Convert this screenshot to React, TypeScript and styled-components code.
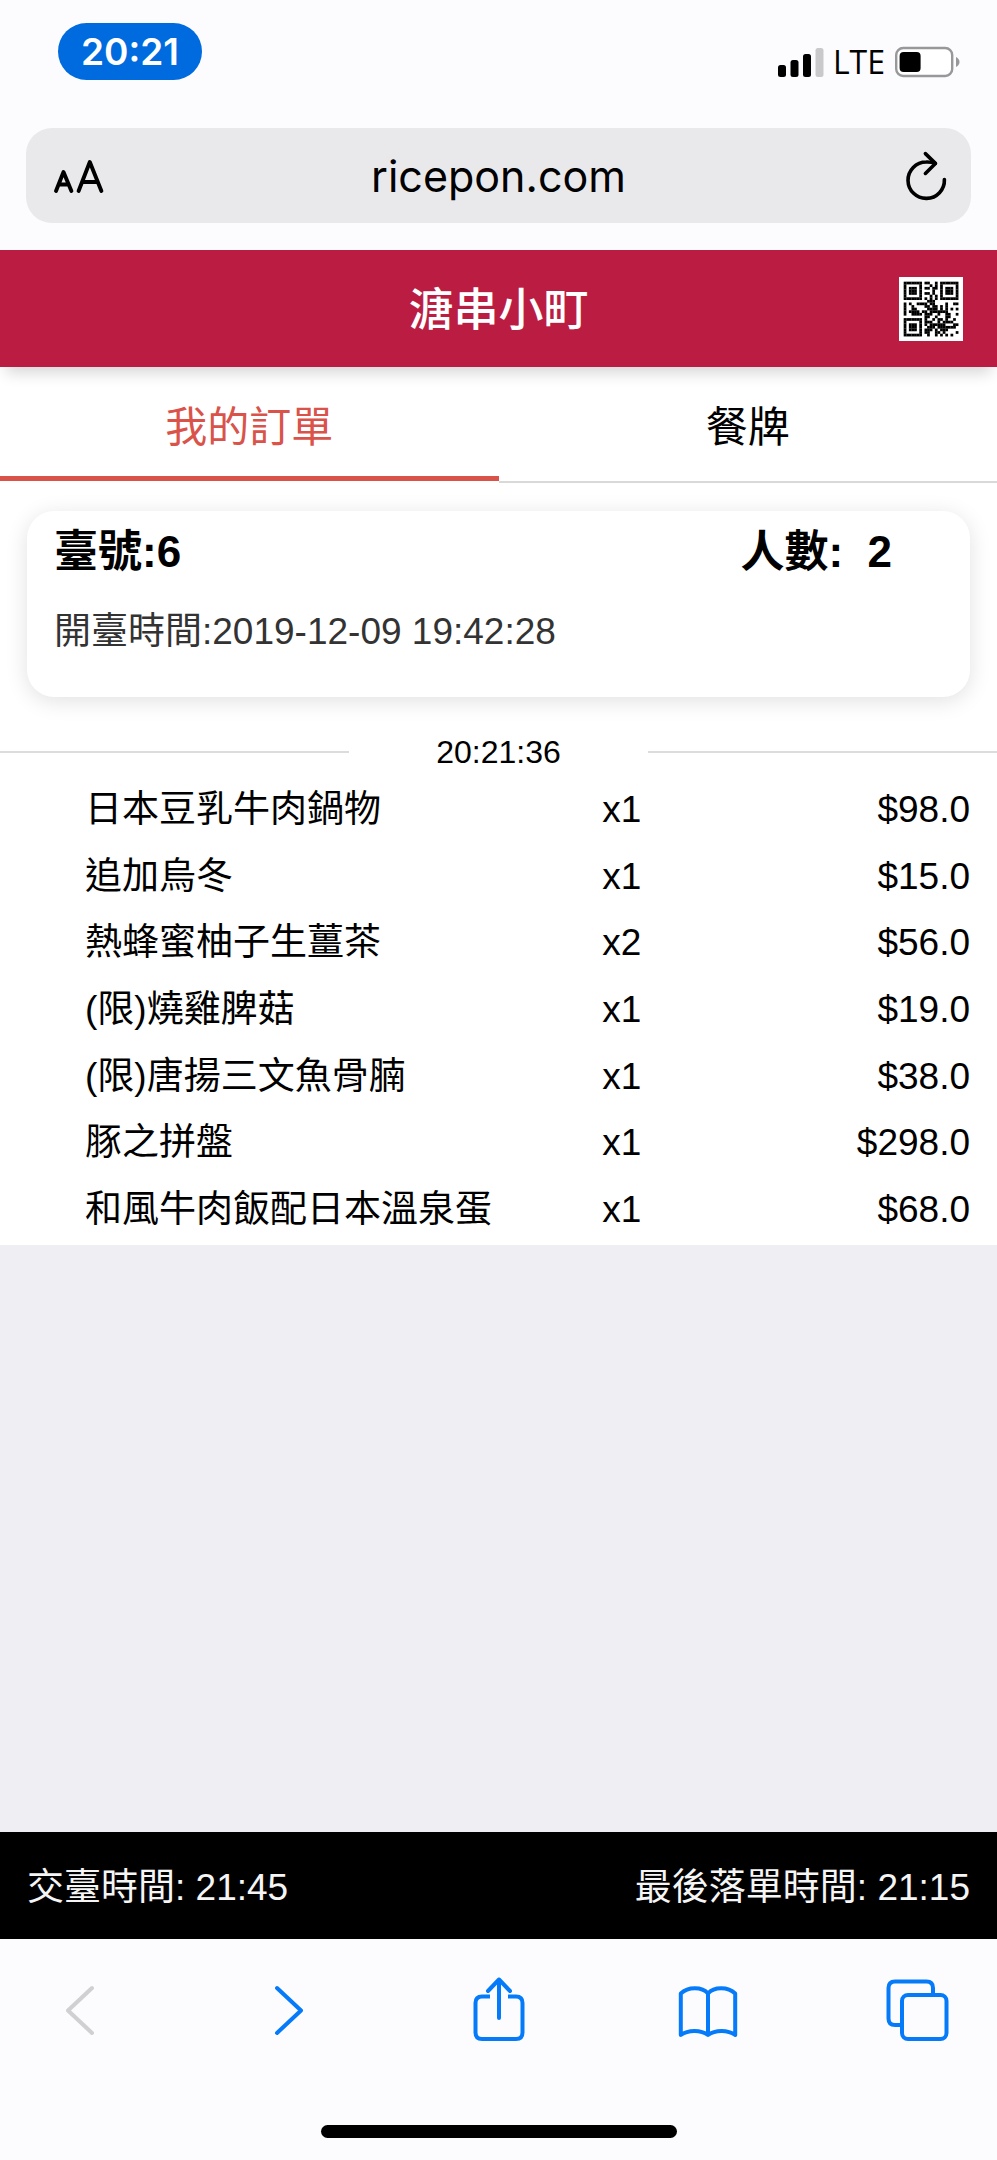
import React from "react";
import styled, { createGlobalStyle } from "styled-components";

const GlobalStyle = createGlobalStyle`
  *, *::before, *::after { box-sizing: border-box; }
  body {
    margin: 0;
    background: #fcfcfe;
    color: #000;
    font-family: "Liberation Sans", "Noto Sans CJK TC", sans-serif;
  }
  button, input { font: inherit; color: inherit; }
  button {
    padding: 0;
    border: 0;
    background: none;
    cursor: pointer;
  }
  svg { display: block; }
`;

const systemFont = `Inter, "Noto Sans CJK TC", sans-serif`;

const Screen = styled.div`
  display: flex;
  flex-direction: column;
  min-height: 100vh;
`;

const StatusBar = styled.header`
  display: flex;
  justify-content: space-between;
  align-items: flex-start;
  padding: 23px 37px 48px 58px;
  font-family: ${systemFont};
`;

const ClockPill = styled.time`
  width: 144px;
  border-radius: 29px;
  background: #006bde;
  color: #fff;
  font-size: 37px;
  font-weight: 600;
  line-height: 57px;
  text-align: center;
`;

const StatusIcons = styled.div`
  display: flex;
  align-items: center;
  gap: 9px;
  margin-top: 23px;
  font-family: "Open Sans", sans-serif;
  font-size: 32px;
  font-weight: 500;
  line-height: 32px;
`;

const AddressBar = styled.div`
  display: flex;
  align-items: center;
  justify-content: space-between;
  height: 95px;
  margin: 0 26px 27px;
  padding: 0 23px;
  border-radius: 26px;
  background: #e9e9eb;
  font-family: ${systemFont};
`;

const Address = styled.input`
  flex: 1;
  min-width: 0;
  padding: 0;
  border: 0;
  outline: 0;
  background: none;
  font-size: 43px;
  line-height: 56px;
  text-align: center;
`;

const ShopHeader = styled.div`
  display: grid;
  grid-template-columns: 64px 1fr 64px;
  align-items: center;
  height: 117px;
  padding: 0 34px;
  background: #bb1d42;
  color: #fff;
  box-shadow: 0 12px 14px -6px rgba(0, 0, 0, 0.16);
  z-index: 1;
`;

const ShopName = styled.h1`
  grid-column: 2;
  margin: 0;
  padding-top: 4px;
  font-size: 45px;
  font-weight: 500;
  line-height: 60px;
  text-align: center;
`;

const TabList = styled.div`
  display: flex;
  align-items: flex-start;
  background: #fff;
`;

const Tab = styled.button<{ $active?: boolean }>`
  flex: 1;
  height: ${(p) => (p.$active ? 114 : 116)}px;
  padding-top: ${(p) => (p.$active ? 12 : 8)}px;
  border-bottom: ${(p) => (p.$active ? "5px solid #d9534a" : "2px solid #d9d9d9")};
  color: ${(p) => (p.$active ? "#d9534a" : "#000")};
  font-size: 42px;
  line-height: 60px;
`;

const Orders = styled.main`
  padding-top: 28px;
  background: #fff;
`;

const TableCard = styled.section`
  height: 186px;
  margin: 0 27px;
  padding: 11px 78px 0 27px;
  border-radius: 27px;
  background: #fff;
  box-shadow: 0 4px 22px rgba(0, 0, 0, 0.12);
`;

const TableSummary = styled.div`
  display: flex;
  justify-content: space-between;
  font-size: 44px;
  font-weight: 700;
  line-height: 60px;
`;

const OpenedAt = styled.p`
  margin: 20px 0 0;
  color: #333;
  font-size: 37px;
  line-height: 60px;
`;

const BatchDivider = styled.div`
  display: grid;
  grid-template-columns: 35fr 30fr 35fr;
  align-items: center;
  margin-top: 35px;
  font-size: 32px;
  line-height: 40px;
  text-align: center;

  &::before,
  &::after {
    content: "";
    height: 2px;
    background: #dcdcdc;
  }
`;

const ItemTable = styled.table`
  width: 100%;
  height: 468px;
  margin-top: 5px;
  padding-bottom: 2px;
  border-spacing: 0;
  table-layout: fixed;
  font-size: 37px;
  line-height: 60px;
`;

const NameCell = styled.td`
  width: 60%;
  padding: 0 0 0 85px;
`;

const QuantityCell = styled.td`
  width: 15%;
  padding: 0 0 0 4px;
`;

const PriceCell = styled.td`
  width: 25%;
  padding: 0 27px 0 0;
  text-align: right;
`;

const EmptyArea = styled.div`
  flex: 1;
  background: #efeef3;
`;

const DeadlineBar = styled.footer`
  display: flex;
  justify-content: space-between;
  align-items: center;
  height: 107px;
  padding: 4px 27px 0;
  background: #000;
  color: #f5f5f5;
  font-size: 37px;
  line-height: 60px;
`;

const Toolbar = styled.nav`
  display: flex;
  justify-content: space-between;
  padding: 32px 40px 0;
  color: #067bfa;
`;

const ToolButton = styled.button`
  width: 80px;
  height: 80px;

  &:disabled { color: #d0d0d2; cursor: default; }
`;

const HomeIndicator = styled.div`
  width: 356px;
  height: 13px;
  margin: 74px auto 22px;
  border-radius: 7px;
  background: #000;
`;

const qrRows = [
  "111111101100101111111",
  "100000100010101000001",
  "101110101101101011101",
  "101110100001001011101",
  "101110101101001011101",
  "100000100010101000001",
  "111111101010101111111",
  "000000000111000000000",
  "101001111011000010011",
  "100100001101101010000",
  "100110000111101010101",
  "101111011011111110000",
  "100111101110010011001",
  "000000001100100011000",
  "111111101001011010010",
  "100000101110010111100",
  "101110101011111100011",
  "101110100111011111110",
  "101110101110101110000",
  "100000101100110100001",
  "111111100100101010100",
];

function QrCode() {
  return (
    <svg width="64" height="64" viewBox="-1.8 -1.8 24.6 24.6" aria-hidden="true">
      <rect x="-1.8" y="-1.8" width="24.6" height="24.6" fill="#fff" />
      {qrRows.map((row, y) =>
        [...row].map((cell, x) =>
          cell === "1" ? <rect key={`${x}-${y}`} x={x} y={y} width="1.05" height="1.05" fill="#000" /> : null
        )
      )}
    </svg>
  );
}

function ToolIcon({ children }: { children: React.ReactNode }) {
  return (
    <svg
      width="80"
      height="80"
      viewBox="0 0 80 80"
      fill="none"
      stroke="currentColor"
      strokeWidth="4"
      strokeLinecap="round"
      strokeLinejoin="round"
      aria-hidden="true"
    >
      {children}
    </svg>
  );
}

const items = [
  { name: "日本豆乳牛肉鍋物", quantity: 1, price: "98.0" },
  { name: "追加烏冬", quantity: 1, price: "15.0" },
  { name: "熱蜂蜜柚子生薑茶", quantity: 2, price: "56.0" },
  { name: "(限)燒雞脾菇", quantity: 1, price: "19.0" },
  { name: "(限)唐揚三文魚骨腩", quantity: 1, price: "38.0" },
  { name: "豚之拼盤", quantity: 1, price: "298.0" },
  { name: "和風牛肉飯配日本溫泉蛋", quantity: 1, price: "68.0" },
];

export default function App() {
  return (
    <>
      <GlobalStyle />
      <Screen>
        <StatusBar>
          <ClockPill>20:21</ClockPill>
          <StatusIcons>
            <svg width="46" height="30" viewBox="0 0 46 30" aria-hidden="true">
              <rect x="0" y="18" width="8" height="12" rx="2.5" />
              <rect x="12.5" y="13" width="8" height="17" rx="2.5" />
              <rect x="25" y="7" width="8" height="23" rx="2.5" />
              <rect x="37.5" y="1" width="8" height="29" rx="2.5" fill="#c9c9cb" />
            </svg>
            <span>LTE</span>
            <svg width="66" height="32" viewBox="0 0 66 32" aria-hidden="true">
              <rect x="2.2" y="2" width="56" height="28" rx="7" fill="#fff" stroke="#98989a" strokeWidth="2.4" />
              <rect x="5.6" y="6" width="21" height="20" rx="4" />
              <path d="M62 11 Q65.5 13 65.5 16 Q65.5 19 62 21 Z" fill="#98989a" />
            </svg>
          </StatusIcons>
        </StatusBar>

        <AddressBar>
          <button aria-label="Text size">
            <svg width="56" height="56" viewBox="-3 0 56 56" fill="none" stroke="#000" strokeWidth="3.9" strokeLinecap="round" strokeLinejoin="round" aria-hidden="true">
              <path d="M4 43 L11.5 24 L19.4 43 M6.6 36.5 H16.8" />
              <path d="M26.6 43 L37.8 14 L49.4 43 M30.4 34 H45.6" />
            </svg>
          </button>
          <Address type="text" aria-label="Address" defaultValue="ricepon.com" />
          <button aria-label="Reload">
            <svg width="56" height="56" viewBox="-3 0 56 56" fill="none" stroke="#000" strokeWidth="3.6" strokeLinecap="round" strokeLinejoin="round" aria-hidden="true">
              <path d="M49.4 31.5 A18.2 18.2 0 1 1 31.2 14 Q36 13.8 40.4 15.4" />
              <path d="M30.4 5.6 L40.4 15.4 L30.4 25.4" />
            </svg>
          </button>
        </AddressBar>

        <ShopHeader>
          <ShopName>溏串小町</ShopName>
          <button aria-label="QR code">
            <QrCode />
          </button>
        </ShopHeader>

        <TabList role="tablist">
          <Tab role="tab" aria-selected="true" $active>
            我的訂單
          </Tab>
          <Tab role="tab" aria-selected="false">
            餐牌
          </Tab>
        </TabList>

        <Orders>
          <TableCard>
            <TableSummary>
              <span>臺號:6</span>
              <span>{"人數:\u00a0\u00a02"}</span>
            </TableSummary>
            <OpenedAt>開臺時間:2019-12-09 19:42:28</OpenedAt>
          </TableCard>

          <BatchDivider>
            <time>20:21:36</time>
          </BatchDivider>

          <ItemTable>
            <tbody>
              {items.map((item) => (
                <tr key={item.name}>
                  <NameCell>{item.name}</NameCell>
                  <QuantityCell>x{item.quantity}</QuantityCell>
                  <PriceCell>${item.price}</PriceCell>
                </tr>
              ))}
            </tbody>
          </ItemTable>
        </Orders>

        <EmptyArea />

        <DeadlineBar>
          <span>交臺時間: 21:45</span>
          <span>最後落單時間: 21:15</span>
        </DeadlineBar>

        <Toolbar>
          <ToolButton aria-label="Back" disabled>
            <ToolIcon>
              <path d="M52 17 L28 39.5 L52 62" />
            </ToolIcon>
          </ToolButton>
          <ToolButton aria-label="Forward">
            <ToolIcon>
              <path d="M28 17 L52 39.5 L28 62" />
            </ToolIcon>
          </ToolButton>
          <ToolButton aria-label="Share">
            <ToolIcon>
              <path d="M29 20 L40 8.5 L51 20 M40 8.5 V47" />
              <path d="M31 25.5 H23 Q16.5 25.5 16.5 32 V61.5 Q16.5 68 23 68 H57 Q63.5 68 63.5 61.5 V32 Q63.5 25.5 57 25.5 H49" strokeLinecap="butt" />
            </ToolIcon>
          </ToolButton>
          <ToolButton aria-label="Bookmarks">
            <ToolIcon>
              <path d="M40 22.5 C34 15.5 20 15.5 12.8 22.5 V64 C20 58.5 33 58.5 40 64 C47 58.5 60 58.5 67.2 64 V22.5 C60 15.5 46 15.5 40 22.5 V64" />
            </ToolIcon>
          </ToolButton>
          <ToolButton aria-label="Tabs">
            <ToolIcon>
              <rect x="25" y="24" width="44.5" height="44" rx="6" />
              <path d="M25 54 H18 Q11.5 54 11.5 47.5 V17 Q11.5 10.5 18 10.5 H49.5 Q56 10.5 56 17 V24" />
            </ToolIcon>
          </ToolButton>
        </Toolbar>
        <HomeIndicator />
      </Screen>
    </>
  );
}
